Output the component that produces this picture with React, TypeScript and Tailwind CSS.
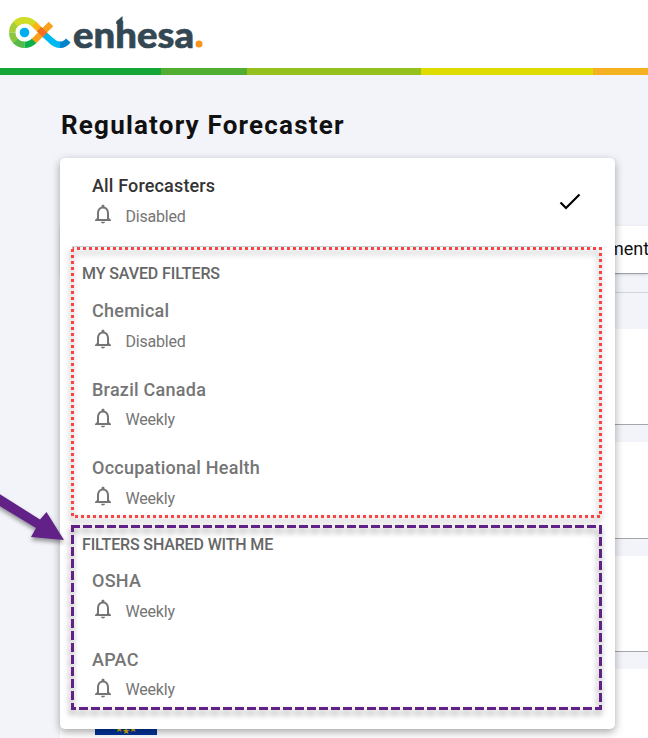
import type { ReactNode } from "react";

type Filter = { name: string; frequency: string };

const savedFilters: Filter[] = [
  { name: "Chemical", frequency: "Disabled" },
  { name: "Brazil Canada", frequency: "Weekly" },
  { name: "Occupational Health", frequency: "Weekly" },
];

const sharedFilters: Filter[] = [
  { name: "OSHA", frequency: "Weekly" },
  { name: "APAC", frequency: "Weekly" },
];

const Logo = () => (
  <svg width="208" height="68" viewBox="0 0 208 68" aria-label="enhesa">
    <g fill="none" strokeWidth="6.4">
      <path d="M12.200 32.500A12.300 12.300 0 0 1 24.500 20.200" stroke="#a6ce39" />
      <path d="M15.500 24.200A12.300 12.300 0 0 1 24.500 20.200C29 20.200 32 22 34.500 24.500" stroke="#d0dc26" />
      <path d="M12.200 32.500A12.300 12.300 0 0 0 16 41.400" stroke="#8cc63f" />
      <path d="M15.500 41A12.300 12.300 0 0 0 24.500 44.800" stroke="#57b947" />
      <path d="M24.500 44.800C29 44.800 32 43 34.500 40.500" stroke="#0db14b" />
      <path d="M34 24L39.500 29.500" stroke="#fbb616" />
      <path d="M34 41L51 24" stroke="#f9a11b" />
      <path d="M39 29L45.500 35.500" stroke="#f36f21" />
      <path d="M45 35L51 40.500C54 43.500 57 44.800 60.500 44.800" stroke="#00b9f2" />
    </g>
    <path d="M60 41.600C62.500 41.600 64.500 40.500 66 38.500L70.500 42.500C68 46 64.500 48 60 48Z" fill="#0083ca" />
    <circle cx="24.500" cy="32.500" r="4.800" fill="#00aeef" />
    <g fill="#344854">
      <text
        x="73"
        y="47.500"
        stroke="#344854"
        strokeWidth="0.6"
        fontSize="36"
        fontWeight="900"
        fontFamily="Lato, sans-serif"
        textLength="121"
        lengthAdjust="spacingAndGlyphs"
      >
        enhesa
      </text>
      <path d="M116.200 21.500L122.500 16V24H116.200Z" />
    </g>
    <circle cx="199" cy="44" r="3.500" fill="#f7941d" />
  </svg>
);

const BellIcon = () => (
  <svg className="-ml-px size-6 shrink-0" viewBox="0 0 24 24" fill="#757575">
    <path d="M12 21.500c1.100 0 2-.7 2-1.700h-4c0 1 .9 1.700 2 1.700zm6-5.500v-5c0-3.070-1.630-5.640-4.500-6.320V4c0-.83-.67-1.300-1.500-1.300s-1.500.47-1.500 1.300v.68C7.640 5.360 6 7.920 6 11v5l-2 2v1h16v-1l-2-2zm-2 1H8v-6c0-2.480 1.510-4.500 4-4.500s4 2.020 4 4.500v6z" />
  </svg>
);

const Frequency = ({ children }: { children: ReactNode }) => (
  <div className="flex h-7 items-center text-base tracking-[-0.2px] text-[#757575]">
    <BellIcon />
    <span className="ml-[10.500px] pt-[5px]">{children}</span>
  </div>
);

const FilterItem = ({ filter }: { filter: Filter }) => (
  <li className="h-[78.500px] pl-8">
    <div className="h-7 text-lg leading-7 font-medium tracking-[0.25px] text-[#757575]">{filter.name}</div>
    <Frequency>{filter.frequency}</Frequency>
  </li>
);

// Dropdown listing every forecaster view
const ForecasterMenu = () => (
  <div className="absolute top-[158px] left-[60px] h-[571px] w-[555px] rounded-[5px] bg-white shadow-[0_3px_8px_rgba(0,0,0,0.35)]">
    <div className="flex h-[88px] items-start justify-between pt-[14px] pr-[33px] pl-8">
      <div>
        <div className="h-7 text-lg leading-7 font-medium tracking-[0.15px] text-[#333333]">All Forecasters</div>
        <Frequency>Disabled</Frequency>
      </div>
      <svg className="mt-[18px] size-6" viewBox="0 0 24 24" fill="none" stroke="#000" strokeWidth="2.2">
        <path d="M2.500 12.500L8 18L21.500 4.500" />
      </svg>
    </div>
    <div className="mr-[23px] ml-3 border-t border-gray-300" />
    <h2 className="h-[50px] pt-[15px] pl-[22px] text-base font-medium tracking-[-0.1px] text-[#666666]">MY SAVED FILTERS</h2>
    <ul>
      {savedFilters.map((filter) => (
        <FilterItem key={filter.name} filter={filter} />
      ))}
    </ul>
    <h2 className="h-[34.500px] pl-[22px] text-base font-medium tracking-[-0.15px] text-[#666666]">FILTERS SHARED WITH ME</h2>
    <ul>
      {sharedFilters.map((filter) => (
        <FilterItem key={filter.name} filter={filter} />
      ))}
    </ul>
  </div>
);

// Callout frames and arrow drawn over the menu
const Callouts = () => (
  <svg className="pointer-events-none absolute inset-0" width="648" height="738" viewBox="0 0 648 738">
    <g fill="none" strokeWidth="3" className="drop-shadow-[-1px_4px_3px_rgba(0,0,0,0.45)]">
      <rect x="72.500" y="248.500" width="528" height="268" stroke="#fa4444" strokeDasharray="3 3" strokeDashoffset="1.500" />
      <rect x="72.500" y="526.500" width="528" height="182" stroke="#622187" strokeDasharray="9 3" strokeDashoffset="1.500" />
    </g>
    <path
      d="M-2 493L40 519.500L46.500 512L64 540L31 537L36 528L-2 505Z"
      fill="#622187"
      className="drop-shadow-[0_3px_2px_rgba(0,0,0,0.4)]"
    />
  </svg>
);

export default function App() {
  return (
    <div className="relative h-[738px] w-[648px] overflow-hidden bg-[#f3f4f9] font-['Roboto',sans-serif]">
      <header className="h-[68px] bg-white">
        <Logo />
      </header>
      <div className="flex h-[7px]">
        <div className="w-[161px] bg-[#13a538]" />
        <div className="w-[86px] bg-[#52ae32]" />
        <div className="w-[174px] bg-[#95c11f]" />
        <div className="w-[172px] bg-[#dedc00]" />
        <div className="flex-1 bg-[#f4b223]" />
      </div>

      <main className="pl-[60px]">
        <h1 className="h-[151px] pt-8 pl-px text-[26px] leading-9 font-bold tracking-[1.200px] text-[#111111]">
          Regulatory Forecaster
        </h1>
        <div className="h-12 border-b border-gray-400 bg-white pl-[548px] text-lg leading-[46px] text-[#111111] shadow-sm">ment</div>
        <div className="mt-[18px] border-t border-gray-300" />
        <div className="mt-9 flex flex-col gap-[17px]">
          <div className="h-24 border-b border-[#a4a6aa] bg-white" />
          <div className="h-[97px] border-b border-[#a4a6aa] bg-white" />
          <div className="h-24 border-b border-[#a4a6aa] bg-white" />
          <div className="h-24 bg-white pt-[3px] pl-[35px]">
            <svg width="62" height="63" viewBox="0 0 62 63">
              <rect width="62" height="63" fill="#003399" />
              <g fill="#e0b800" fontSize="9" textAnchor="middle">
                <text x="24" y="60">★</text>
                <text x="31" y="62">★</text>
                <text x="38" y="60">★</text>
              </g>
            </svg>
          </div>
        </div>
      </main>

      <ForecasterMenu />
      <Callouts />
    </div>
  );
}
